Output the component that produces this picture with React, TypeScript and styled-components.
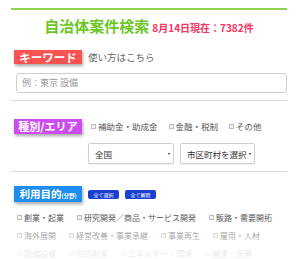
import React from "react";
import styled, { createGlobalStyle } from "styled-components";

const Global = createGlobalStyle`
  html, body { margin: 0; padding: 0; background: #fff; overflow: hidden; }
  body { font-family: "Noto Sans CJK JP", "Noto Sans", sans-serif; color: #444; }
`;

const Page = styled.div`
  padding: 8px 13px 0 11px;
  width: 300px;
  box-sizing: border-box;
`;

const Header = styled.div`
  border-top: 2px solid #8fd24e;
  padding-top: 7px;
  display: flex;
  justify-content: center;
  align-items: baseline;
  gap: 3px;
  height: 18px;
  line-height: 18px;
`;

const Title = styled.h1`
  margin: 0;
  font-size: 15px;
  font-weight: 700;
  color: #6cc724;
  line-height: 18px;
`;

const Count = styled.span`
  font-size: 10px;
  font-weight: 700;
  color: #f4335f;
`;

const Section = styled.section<{ $top: number }>`
  margin-top: ${(p) => p.$top}px;
  padding: 0 0 0 3px;
`;

const Row = styled.div`
  display: grid;
  grid-template-columns: 68px 1fr;
  column-gap: 6px;
  row-gap: 8px;
  align-items: center;
`;

const Label = styled.div<{ $bg: string; $h: number; $fs: number }>`
  width: 68px;
  height: ${(p) => p.$h}px;
  line-height: ${(p) => p.$h}px;
  background: ${(p) => p.$bg};
  color: #fff;
  font-weight: 700;
  font-size: ${(p) => p.$fs}px;
  text-align: center;
  white-space: nowrap;
  box-shadow: 1px 2px 3px rgba(0, 0, 0, 0.35);
`;

const Small = styled.span`
  font-size: 5.5px;
  font-weight: 700;
`;

const Help = styled.span`
  font-size: 9.5px;
  color: #666;
`;

const Input = styled.div`
  margin: 9px 0 0 2px;
  height: 20px;
  box-sizing: border-box;
  border: 1px solid #cfcfcf;
  border-radius: 3px;
  padding-left: 5px;
  font-size: 9px;
  line-height: 18px;
  color: #9a9a9a;
`;

const Divider = styled.hr`
  margin: 7px 0 0 0;
  border: none;
  border-top: 1px solid #dcdcdc;
`;

const Checks = styled.div<{ $gap: number }>`
  display: flex;
  flex-wrap: wrap;
  column-gap: ${(p) => p.$gap}px;
  padding-left: 3px;
`;

const Check = styled.span<{ $fs: number }>`
  display: inline-flex;
  align-items: center;
  gap: 2px;
  font-size: ${(p) => p.$fs}px;
  color: #555;
  white-space: nowrap;
  height: 18px;
  &::before {
    content: "";
    width: 5px;
    height: 5px;
    border: 1px solid #bdbdbd;
    background: #f0f0f0;
    box-sizing: border-box;
  }
`;

const Selects = styled.div`
  grid-column: 2;
  display: flex;
  gap: 6px;
`;

const Select = styled.div<{ $w: number }>`
  width: ${(p) => p.$w}px;
  height: 21px;
  box-sizing: border-box;
  border: 1px solid #cfcfcf;
  border-radius: 2px;
  box-shadow: 0 1px 1px rgba(0, 0, 0, 0.06);
  display: flex;
  align-items: center;
  justify-content: space-between;
  padding: 0 3px 0 6px;
  font-size: 8.5px;
  color: #333;
  white-space: nowrap;
`;

const Arrow = styled.span`
  flex: none;
  width: 0;
  height: 0;
  border-left: 1.5px solid transparent;
  border-right: 1.5px solid transparent;
  border-top: 2.5px solid #222;
`;

const Buttons = styled.div`
  display: flex;
  gap: 6px;
  align-items: center;
`;

const MiniButton = styled.span`
  width: 31px;
  height: 9px;
  line-height: 9px;
  background: #1b3fd0;
  border-radius: 2px;
  color: #fff;
  font-size: 5px;
  text-align: center;
`;

const ListWrap = styled.div`
  position: relative;
  margin-top: 6px;
`;

const Fade = styled.div`
  position: absolute;
  left: 0;
  right: 0;
  top: 12px;
  bottom: 0;
  background: linear-gradient(rgba(255, 255, 255, 0.1), rgba(255, 255, 255, 0.88) 75%);
`;

const purposes = [
  "創業・起業",
  "研究開発／商品・サービス開発",
  "販路・需要開拓",
  "海外展開",
  "経営改善・事業承継",
  "事業再生",
  "雇用・人材",
  "設備投資",
  "知的財産",
  "エネルギー・環境",
  "健康・医療",
];

export default function App() {
  return (
    <>
      <Global />
      <Page>
        <Header>
          <Title>自治体案件検索</Title>
          <Count>8月14日現在：7382件</Count>
        </Header>

        <Section $top={15}>
          <Row>
            <Label $bg="#fb5252" $h={14} $fs={11.5}>キーワード</Label>
            <Help>使い方はこちら</Help>
          </Row>
          <Input>例：東京 設備</Input>
        </Section>
        <Divider />

        <Section $top={16}>
          <Row>
            <Label $bg="#cb4cef" $h={15} $fs={11}>種別/エリア</Label>
            <Checks $gap={11}>
              <Check $fs={8.5}>補助金・助成金</Check>
              <Check $fs={8.5}>金融・税制</Check>
              <Check $fs={8.5}>その他</Check>
            </Checks>
            <Selects>
              <Select $w={86}>
                全国
                <Arrow />
              </Select>
              <Select $w={75}>
                市区町村を選択
                <Arrow />
              </Select>
            </Selects>
          </Row>
        </Section>
        <Divider />

        <Section $top={14}>
          <Row>
            <Label $bg="#1b8ef0" $h={16} $fs={10.5}>
              利用目的<Small>(分野)</Small>
            </Label>
            <Buttons>
              <MiniButton>全て選択</MiniButton>
              <MiniButton>全て解除</MiniButton>
            </Buttons>
          </Row>
          <ListWrap>
            <Checks $gap={13}>
              {purposes.map((p) => (
                <Check key={p} $fs={8}>
                  {p}
                </Check>
              ))}
            </Checks>
            <Fade />
          </ListWrap>
        </Section>
      </Page>
    </>
  );
}
